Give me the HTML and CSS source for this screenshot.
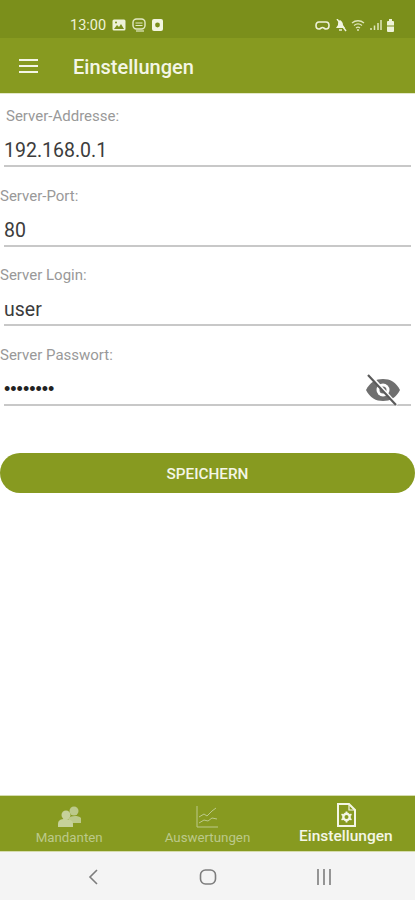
FILE: index.html
```html
<!DOCTYPE html>
<html lang="de">
<head>
  <meta charset="UTF-8">
  <title>Einstellungen</title>
  <link rel="stylesheet" href="styles.css">
</head>
<body>

<div class="phone">
  <div class="statusbar">
    <div class="status-left">
      <span class="clock">13:00</span>
      <svg width="14" height="12" viewBox="0 0 14 12"><rect x="0.5" y="0.5" width="13" height="11" rx="1.5" fill="#eef2d8"/><path d="M2 10l3-4 2 2 2-3 3 5z" fill="#7b8f1b"/><circle cx="4" cy="3.5" r="1" fill="#7b8f1b"/></svg>
      <svg width="14" height="14" viewBox="0 0 14 14"><rect x="1" y="1" width="12" height="10" rx="3.5" fill="none" stroke="#e3e9c4" stroke-width="1.4"/><path d="M3.5 5h7M3.5 7.5h7" stroke="#e3e9c4" stroke-width="1.2"/><path d="M4 13h8" stroke="#e3e9c4" stroke-width="1.2"/></svg>
      <svg width="11" height="12" viewBox="0 0 11 12"><rect width="11" height="12" rx="2" fill="#f2f5e0"/><circle cx="5.5" cy="6" r="2.4" fill="#7b8f1b"/></svg>
    </div>
    <div class="status-right">
      <svg width="15" height="9" viewBox="0 0 15 9"><path d="M4 1h7c2 0 3 1.5 3 3.5S13 8 11 8c-1.5 0-2-1.500-3.500-1.500S5.500 8 4 8C2 8 1 6.500 1 4.500S2 1 4 1z" fill="none" stroke="#eef2d8" stroke-width="1.6"/></svg>
      <svg width="13" height="13" viewBox="0 0 13 13"><path d="M6 1c2 1 3 3 3 5l2 3H2l2-3c0-2 0-4 2-5z" fill="#f2f5e0"/><path d="M3 0l9 12" stroke="#f2f5e0" stroke-width="1.4"/><path d="M5 11h3" stroke="#f2f5e0" stroke-width="1.4"/></svg>
      <svg width="15" height="12" viewBox="0 0 15 12"><path d="M1 4c3.500-3 8.500-3 12 0M3 6.500c2.500-2 5.500-2 8 0M5 9c1.200-1 2.800-1 4 0" fill="none" stroke="#dfe6bb" stroke-width="1.3"/><circle cx="7" cy="11" r="1" fill="#dfe6bb"/></svg>
      <svg width="12" height="12" viewBox="0 0 12 12"><path d="M1 11V9M4.500 11V6.500M8 11V4M11 11V1" stroke="#dfe6bb" stroke-width="1.5"/></svg>
      <svg width="9" height="13" viewBox="0 0 9 13"><rect x="3" y="0" width="3" height="2" fill="#eef2d8"/><rect x="1" y="2" width="7" height="11" rx="1" fill="#eef2d8"/><path d="M1 7h7" stroke="#7b8f1b"/></svg>
    </div>
  </div>

  <header class="appbar">
    <div class="burger"><span></span><span></span><span></span></div>
    <h1>Einstellungen</h1>
  </header>

  <main class="content">
    <form class="settings">
      <div class="field">
        <div class="label label-in">Server-Addresse:</div>
        <div class="value">192.168.0.1</div>
      </div>
      <div class="field">
        <div class="label">Server-Port:</div>
        <div class="value">80</div>
      </div>
      <div class="field">
        <div class="label">Server Login:</div>
        <div class="value">user</div>
      </div>
      <div class="field">
        <div class="label">Server Passwort:</div>
        <div class="value value-pass">
          <span class="dots">••••••••</span>
          <svg class="eye" width="36" height="32" viewBox="0 0 36 32">
            <path d="M1 16C5 8 11 5 18 5s13 3 17 11c-4 8-10 11-17 11S5 24 1 16z" fill="#6f6f6f"/>
            <circle cx="18" cy="16" r="6.5" fill="#fff"/>
            <circle cx="18" cy="16" r="3.5" fill="#6f6f6f"/>
            <path d="M4 0l28 31" stroke="#fff" stroke-width="3"/>
            <path d="M3 1l28 30" stroke="#5a5a5a" stroke-width="2.2"/>
          </svg>
        </div>
      </div>
      <button type="button" class="btn">SPEICHERN</button>
    </form>
  </main>

  <nav class="tabs">
    <div class="tab">
      <svg width="23" height="22" viewBox="0 0 23 22"><circle cx="16" cy="5" r="4.5" fill="#bcc98a"/><path d="M11 12c1-2 9-3 12 0v5H11z" fill="#bcc98a"/><circle cx="8" cy="9" r="4.5" fill="#c6d19a"/><path d="M0 18c0-4 3-5 7-5s8 1 8 5v3H0z" fill="#c6d19a"/></svg>
      <span>Mandanten</span>
    </div>
    <div class="tab">
      <svg width="22" height="22" viewBox="0 0 22 22" fill="none" stroke="#bcc98a" stroke-width="1"><path d="M1 0v21h21"/><path d="M3 11l5-3 3 2 5-5 4-3"/><path d="M3 17l5-3 4 1 4-3 5 1"/></svg>
      <span>Auswertungen</span>
    </div>
    <div class="tab tab-active">
      <svg width="20" height="24" viewBox="0 0 20 24">
        <path d="M2 1h11l6 6v16H2z" fill="none" stroke="#f4f6e6" stroke-width="2"/>
        <path d="M13 1v6h6" fill="none" stroke="#f4f6e6" stroke-width="1.2"/>
        <circle cx="10.5" cy="14" r="3.2" fill="none" stroke="#f4f6e6" stroke-width="2.4"/>
        <path d="M10.5 8.500v2M10.5 17.500v2M5.500 11.200l1.800 1M13.700 15.800l1.800 1M5.500 16.800l1.800-1M13.700 12.200l1.800-1" stroke="#f4f6e6" stroke-width="1.8"/>
      </svg>
      <span>Einstellungen</span>
    </div>
  </nav>

  <div class="sysnav">
    <svg width="12" height="18" viewBox="0 0 12 18"><path d="M10 2L3 9l7 7" fill="none" stroke="#7d7d7d" stroke-width="1.6"/></svg>
    <svg width="18" height="16" viewBox="0 0 18 16"><rect x="1.5" y="1" width="15" height="14" rx="5" fill="none" stroke="#7d7d7d" stroke-width="1.6"/></svg>
    <svg width="16" height="16" viewBox="0 0 16 16"><path d="M2 0v16M8 0v16M14 0v16" stroke="#7d7d7d" stroke-width="1.6"/></svg>
  </div>
</div>

</body>
</html>
```

FILE: styles.css
```css
html, body {
  margin: 0;
  padding: 0;
}
body {
  font-family: Roboto, "Liberation Sans", sans-serif;
  background: #fff;
}
.phone {
  width: 415px;
  height: 900px;
  display: flex;
  flex-direction: column;
  overflow: hidden;
}
.statusbar {
  height: 38px;
  background: #7b8f1b;
  display: flex;
  align-items: center;
  justify-content: space-between;
  padding: 14px 20px 2px 70px;
  box-sizing: border-box;
  color: #eef2d8;
}
.status-left, .status-right {
  display: flex;
  align-items: center;
}
.status-left {
  gap: 6px;
}
.status-right {
  gap: 4px;
}
.clock {
  font-size: 14.5px;
}
.appbar {
  height: 56px;
  background: #879a20;
  display: flex;
  align-items: center;
  padding-left: 19px;
  box-sizing: border-box;
  border-bottom: 1px solid #e3e8c8;
}
.burger {
  width: 19px;
  display: flex;
  flex-direction: column;
  gap: 4px;
  margin-right: 35px;
}
.burger span {
  height: 2px;
  background: #f4f6e6;
}
.appbar h1 {
  margin: 3px 0 0 0;
  font-size: 20px;
  font-weight: 500;
  color: #f4f6e6;
}
.content {
  flex: 1;
}
.settings {
  display: flex;
  flex-direction: column;
  padding-top: 13px;
}
.field {
  height: 79.5px;
}
.label {
  font-size: 15px;
  line-height: 18px;
  color: #999;
}
.label-in {
  padding-left: 6px;
}
.value {
  height: 34px;
  margin: 8px 4px 0 4px;
  padding-top: 4px;
  border-bottom: 2px solid #c8c8c8;
  font-size: 19.5px;
  line-height: 28px;
  color: #3c3c3c;
  box-sizing: border-box;
  display: flex;
  align-items: center;
  justify-content: space-between;
}
.value-pass {
  position: relative;
  padding-top: 2px;
}
.dots {
  font-size: 18px;
  color: #222;
  font-family: "Liberation Sans", sans-serif;
}
.eye {
  position: absolute;
  right: 10px;
  top: 2px;
}
.btn {
  height: 40px;
  margin-top: 28px;
  padding-top: 3px;
  border: none;
  border-radius: 20px;
  background: #879a20;
  color: #f4f6e6;
  font-family: Roboto, "Liberation Sans", sans-serif;
  font-size: 15.3px;
  font-weight: 500;
}
.tabs {
  height: 57px;
  background: #879a20;
  border-top: 1px solid #d5dcae;
  border-bottom: 1px solid #d5dcae;
  box-sizing: border-box;
  display: flex;
  align-items: flex-start;
}
.tab {
  flex: 1;
  height: 55px;
  display: flex;
  flex-direction: column;
  align-items: center;
  justify-content: flex-end;
  gap: 2px;
  padding-bottom: 6px;
  box-sizing: border-box;
  color: #bcc98a;
  font-size: 13.3px;
}
.tab-active {
  gap: 0;
  color: #f4f6e6;
  font-size: 15.5px;
  font-weight: 500;
}
.sysnav {
  height: 48px;
  background: #f4f4f4;
  display: flex;
  align-items: center;
  justify-content: space-between;
  padding: 2px 83px 0 87px;
  box-sizing: border-box;
}
```
